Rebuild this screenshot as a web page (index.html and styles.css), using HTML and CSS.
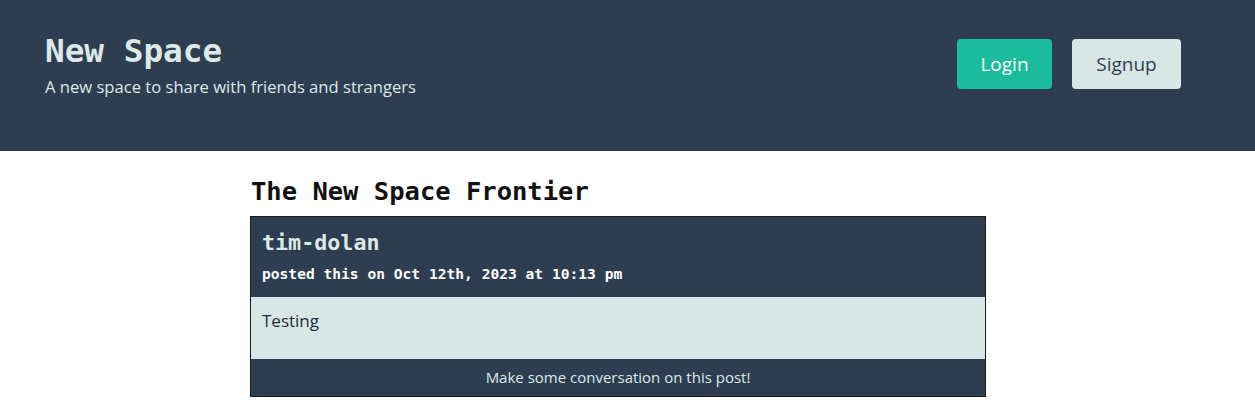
FILE: index.html
```html
<!DOCTYPE html>
<html>
<head>
<meta charset="utf-8">
<link rel="stylesheet" href="styles.css">
</head>
<body>
<header class="site-header">
  <div class="brand">
    <h1 class="brand-title">New Space</h1>
    <p class="brand-tagline">A new space to share with friends and strangers</p>
  </div>
  <nav class="auth">
    <button class="btn btn-login">Login</button>
    <button class="btn btn-signup">Signup</button>
  </nav>
</header>
<main class="content">
  <h2 class="page-title">The New Space Frontier</h2>
  <article class="post">
    <div class="post-head">
      <h3 class="post-author">tim-dolan</h3>
      <p class="post-meta">posted this on Oct 12th, 2023 at 10:13 pm</p>
    </div>
    <div class="post-body">Testing</div>
    <div class="post-foot">Make some conversation on this post!</div>
  </article>
</main>
</body>
</html>
```
FILE: styles.css
```css
* { box-sizing: border-box; }
body {
  margin: 0;
  font-family: "Open Sans", "Noto Sans", sans-serif;
  background: #fff;
}
.site-header {
  background: #2e3e50;
  height: 151px;
  display: flex;
  justify-content: space-between;
  align-items: flex-start;
  padding: 31px 74px 0 45px;
}
.brand-title {
  margin: 0;
  font-family: "DejaVu Sans Mono", monospace;
  font-weight: bold;
  font-size: 32.7px;
  line-height: 40px;
  color: #dbe9e8;
}
.brand-tagline {
  margin: 4px 0 0;
  font-size: 16.6px;
  line-height: 24px;
  color: #dbe9e8;
}
.auth {
  display: flex;
  gap: 20px;
  margin-top: 8px;
}
.btn {
  height: 50px;
  border: none;
  border-radius: 4px;
  font-family: "Open Sans", "Noto Sans", sans-serif;
  font-size: 19px;
  padding: 0 22px;
  cursor: pointer;
}
.btn-login { background: #1abc9c; color: #fff; width: 95px; }
.btn-signup { background: #d8e7e6; color: #2e3e50; width: 109px; }
.content {
  margin-left: 250px;
  width: 736px;
  padding-top: 24px;
}
.page-title {
  margin: 0 0 8px 1px;
  font-family: "DejaVu Sans Mono", monospace;
  font-weight: bold;
  font-size: 25.5px;
  line-height: 33px;
  color: #111;
}
.post {
  border: 1px solid #1a1a1a;
}
.post-head {
  background: #2e3e50;
  padding: 12px 11px 10px;
  height: 80px;
}
.post-author {
  margin: 0;
  font-family: "DejaVu Sans Mono", monospace;
  font-weight: bold;
  font-size: 21.7px;
  line-height: 28px;
  color: #dbe9e8;
}
.post-meta {
  margin: 8px 0 0;
  font-family: "DejaVu Sans Mono", monospace;
  font-weight: bold;
  font-size: 14.6px;
  line-height: 18px;
  color: #fff;
}
.post-body {
  background: #d8e7e6;
  height: 62px;
  padding: 12px 11px;
  font-size: 17px;
  line-height: 24px;
  color: #1f2d3a;
}
.post-foot {
  background: #2e3e50;
  height: 37px;
  text-align: center;
  font-size: 15px;
  line-height: 37px;
  color: #dbe9e8;
}
```
